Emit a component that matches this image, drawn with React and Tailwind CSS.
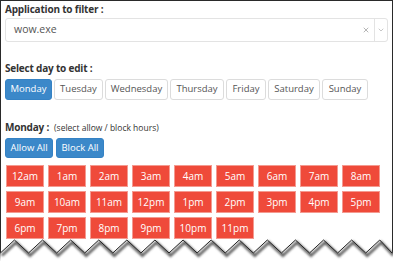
import { X, ChevronDown } from "lucide-react";

const days = [
	{ name: "Monday", w: "w-[47px]" },
	{ name: "Tuesday", w: "w-[49px]" },
	{ name: "Wednesday", w: "w-[63px]" },
	{ name: "Thursday", w: "w-[54px]" },
	{ name: "Friday", w: "w-[40px]" },
	{ name: "Saturday", w: "w-[52px]" },
	{ name: "Sunday", w: "w-[46px]" }
];

const hours = [
	"12am", "1am", "2am", "3am", "4am", "5am", "6am", "7am", "8am",
	"9am", "10am", "11am", "12pm", "1pm", "2pm", "3pm", "4pm", "5pm",
	"6pm", "7pm", "8pm", "9pm", "10pm", "11pm"
];

function TornEdge() {
	const pts = [];
	for (let x = 0.4, i = 0; x < 400; x += 14.05, i++) {
		pts.push([Math.min(x, 392), i % 2 === 0 ? 253 : 240]);
	}
	const line = pts.map((p) => p.join(",")).join(" ");
	const fill = `0,262 ${line} 400,262`;
	return (
		<svg className="pointer-events-none absolute left-0 top-0" width="400" height="262">
			<defs>
				<filter id="blur" x="-10%" y="-50%" width="120%" height="200%">
					<feGaussianBlur stdDeviation="0.9" />
				</filter>
			</defs>
			<polygon points={fill} fill="#fff" />
			<polyline points={line} fill="none" stroke="#666" strokeWidth="3" transform="translate(1.5,2.5)" filter="url(#blur)" />
			<polyline points={line} fill="none" stroke="#222" strokeWidth="1" />
			<rect x="393" y="0" width="7" height="262" fill="#fff" />
		</svg>
	);
}

export default function App() {
	return (
		<div className="relative h-[262px] w-[400px] overflow-hidden bg-white font-['Open_Sans',sans-serif] text-[#333]">
			<div className="h-[262px] w-[396px] pr-[3px]">
				<div className="h-full border-l border-r border-t border-[#2a2a2a] px-[4px] pt-[1px] shadow-[2px_0_1px_rgba(0,0,0,0.45)]">
					{/* app select */}
					<p className="text-[10px] font-bold leading-[15px] tracking-[-0.2px]">Application to filter :</p>
					<div className="mt-[1px] flex h-[24px] items-center rounded-[3px] border border-[#e3e3e3]">
						<span className="flex-1 pl-[8px] text-[10.5px] text-[#555]">wow.exe</span>
						<X className="mr-[4px] h-[8px] w-[8px] text-[#999]" strokeWidth={2.2} />
						<span className="h-[22px] w-px bg-[#e3e3e3]" />
						<ChevronDown className="mx-[2px] h-[8px] w-[8px] text-[#aaa]" strokeWidth={2} />
					</div>

					{/* days */}
					<p className="mt-[19px] text-[10px] font-bold leading-[15px] tracking-[-0.2px]">Select day to edit :</p>
					<div className="mt-[3px] flex gap-[2px]">
						{days.map((d, i) => (
							<button
								key={d.name}
								className={
									i === 0
										? `${d.w} h-[21px] rounded-[3px] border border-[#3582c4] bg-[#3b88c9] text-[9.5px] text-white`
										: `${d.w} h-[21px] rounded-[3px] border border-[#dcdcdc] bg-white text-[9.5px] text-[#555]`
								}
							>
								{d.name}
							</button>
						))}
					</div>

					{/* hours */}
					<p className="mt-[18px] leading-[15px]">
						<span className="text-[10px] font-bold tracking-[-0.2px]">Monday :</span>
						<span className="ml-[5px] text-[8.5px]">(select allow / block hours)</span>
					</p>
					<div className="mt-[3px] flex gap-[3px]">
						<button className="h-[20px] w-[48px] rounded-[3px] border border-[#3582c4] bg-[#3b88c9] text-[9.5px] text-white">Allow All</button>
						<button className="h-[20px] w-[48px] rounded-[3px] border border-[#3582c4] bg-[#3b88c9] text-[9.5px] text-white">Block All</button>
					</div>
					<div className="ml-[1px] mt-[7px] grid grid-cols-[repeat(9,38px)] gap-x-[4px] gap-y-[4px]">
						{hours.map((h) => (
							<button
								key={h}
								className="h-[22px] border border-[#f49a90] bg-[#ef4a3a] text-[10px] text-white"
							>
								{h}
							</button>
						))}
					</div>
				</div>
			</div>
			<TornEdge />
		</div>
	);
}
